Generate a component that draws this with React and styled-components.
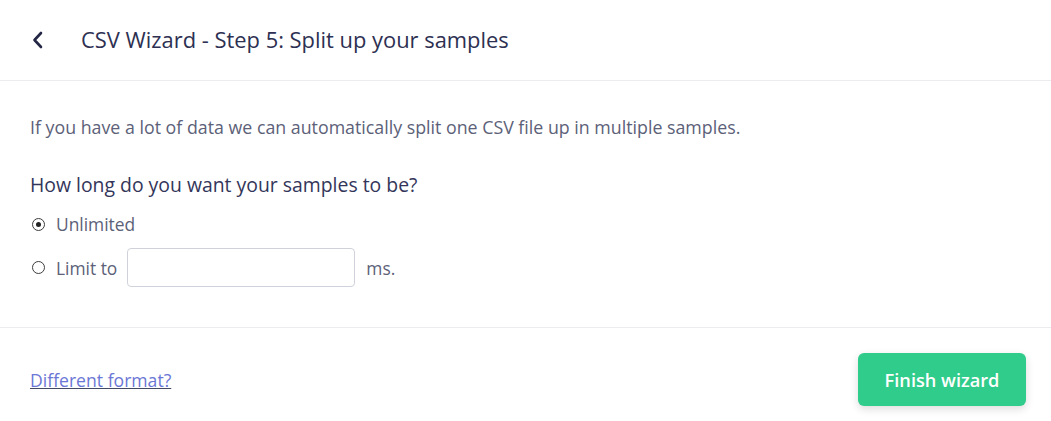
import React, {useState} from 'react';
import styled, {createGlobalStyle} from 'styled-components';

const GlobalStyle = createGlobalStyle`
  body {
    margin: 0;
    background: #ffffff;
    font-family: 'Open Sans', 'Noto Sans', sans-serif;
    color: #2b2d4f;
  }
`;

const Page = styled.div`
  width: 1051px;
  background: #fff;
`;

const Header = styled.div`
  height: 81px;
  display: flex;
  align-items: center;
  padding: 0 26px;
  border-bottom: 1px solid #ececf0;
  box-sizing: border-box;
`;

const BackButton = styled.button`
  border: none;
  background: none;
  padding: 0;
  width: 24px;
  height: 24px;
  display: flex;
  align-items: center;
  justify-content: center;
  color: #232745;
  cursor: pointer;
  margin-right: 31px;
`;

const Title = styled.h1`
  margin: 0;
  font-size: 21.9px;
  line-height: 30px;
  font-weight: 500;
  color: #2d3052;
`;

const Body = styled.div`
  padding: 33px 30px 40px;
  border-bottom: 1px solid #ececf0;
`;

const Intro = styled.p`
  margin: 0 0 30px;
  font-size: 17.8px;
  line-height: 27px;
  color: #5c6178;
`;

const Question = styled.h2`
  margin: 0 0 12px;
  font-size: 19.4px;
  line-height: 27px;
  font-weight: 500;
  color: #33365a;
`;

const Options = styled.div`
  display: flex;
  flex-direction: column;
  gap: 10px;
`;

const Option = styled.label`
  display: flex;
  align-items: center;
  gap: 11px;
  height: ${p => (p.$tall ? '39px' : '28px')};
  font-size: 17.4px;
  color: #5c6178;
  cursor: pointer;
`;

const Radio = styled.span`
  width: 13px;
  height: 13px;
  border: 1.5px solid #3c3c3c;
  border-radius: 50%;
  box-sizing: border-box;
  display: flex;
  align-items: center;
  justify-content: center;
  margin-left: 2px;
  &::after {
    content: '';
    width: 5px;
    height: 5px;
    border-radius: 50%;
    background: ${p => (p.$checked ? '#222' : 'transparent')};
  }
`;

const LimitInput = styled.input`
  width: 228px;
  height: 39px;
  box-sizing: border-box;
  border: 1px solid #cfd2da;
  border-radius: 4px;
  margin: 0 0 0 -1px;
  font-family: inherit;
  font-size: 16px;
  padding: 0 10px;
  outline: none;
`;

const Footer = styled.div`
  display: flex;
  justify-content: space-between;
  align-items: center;
  padding: 25px 25px 25px 30px;
`;

const Link = styled.a`
  color: #6b77d6;
  font-size: 17.6px;
  text-decoration: underline;
  text-decoration-color: #444a66;
  cursor: pointer;
`;

const FinishButton = styled.button`
  background: #2fcc8b;
  color: #fff;
  border: none;
  border-radius: 6px;
  height: 53px;
  width: 168px;
  font-family: inherit;
  font-size: 18.2px;
  font-weight: 600;
  box-shadow: 0 3px 8px rgba(0, 0, 0, 0.14);
  cursor: pointer;
`;

const App = () => {
  const [mode, setMode] = useState('unlimited');

  return (
    <Page>
      <GlobalStyle />
      <Header>
        <BackButton aria-label="Back">
          <svg width="14" height="18" viewBox="0 0 14 18" fill="none">
            <path d="M10 2 L3.5 9 L10 16" stroke="currentColor" strokeWidth="2.6" strokeLinecap="round" strokeLinejoin="round" />
          </svg>
        </BackButton>
        <Title>CSV Wizard - Step 5: Split up your samples</Title>
      </Header>
      <Body>
        <Intro>If you have a lot of data we can automatically split one CSV file up in multiple samples.</Intro>
        <Question>How long do you want your samples to be?</Question>
        <Options>
          <Option onClick={() => setMode('unlimited')}>
            <Radio $checked={mode === 'unlimited'} />
            Unlimited
          </Option>
          <Option $tall onClick={() => setMode('limit')}>
            <Radio $checked={mode === 'limit'} />
            Limit to
            <LimitInput />
            ms.
          </Option>
        </Options>
      </Body>
      <Footer>
        <Link>Different format?</Link>
        <FinishButton>Finish wizard</FinishButton>
      </Footer>
    </Page>
  );
};

export default App;
